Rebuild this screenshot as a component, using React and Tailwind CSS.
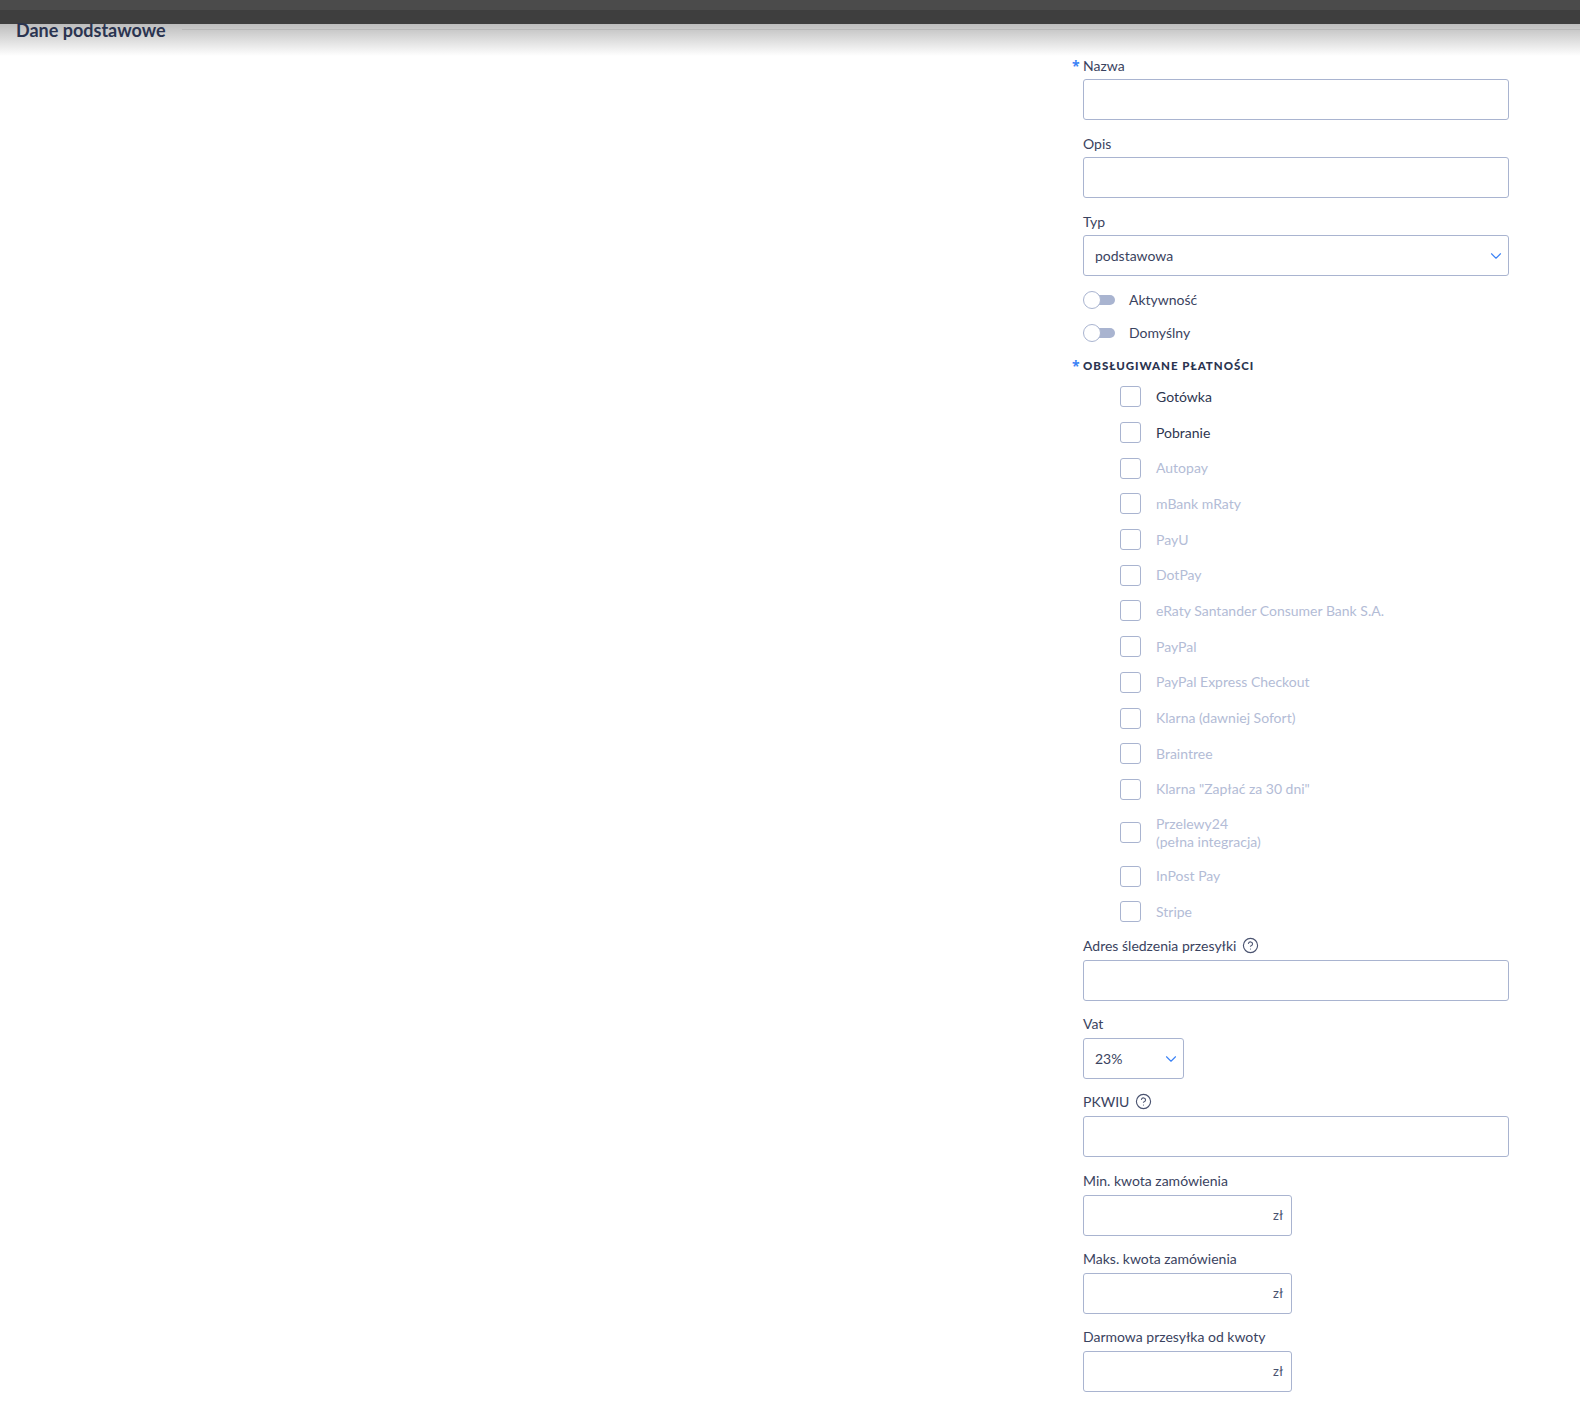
import { ChevronDown, CircleHelp } from 'lucide-react';

const payments = [
	{ name: 'Gotówka', active: true },
	{ name: 'Pobranie', active: true },
	{ name: 'Autopay' },
	{ name: 'mBank mRaty' },
	{ name: 'PayU' },
	{ name: 'DotPay' },
	{ name: 'eRaty Santander Consumer Bank S.A.' },
	{ name: 'PayPal' },
	{ name: 'PayPal Express Checkout' },
	{ name: 'Klarna (dawniej Sofort)' },
	{ name: 'Braintree' },
	{ name: 'Klarna "Zapłać za 30 dni"' },
	{ name: 'Przelewy24', extra: '(pełna integracja)' },
	{ name: 'InPost Pay' },
	{ name: 'Stripe' },
];

function Star() {
	return <span className="absolute left-[-11px] top-[-1px] text-[14px] font-bold font-['Noto_Sans',sans-serif] text-[#3b82f6]">*</span>;
}

function Label({ children, required, hint }) {
	return (
		<label className="relative flex items-center h-5 mb-[3px] pb-[2px] gap-[6px]">
			{required && <Star />}
			{children}
			{hint && <CircleHelp size={17} strokeWidth={1.6} className="text-[#4a5370]" />}
		</label>
	);
}

function TextField({ label, required, hint, last }) {
	return (
		<div className={last ? 'mb-[15px]' : 'mb-[14px]'}>
			<Label required={required} hint={hint}>{label}</Label>
			<input type="text" className="block w-full h-[41px] px-3 bg-white border border-[#a9b4d0] rounded-[3px] outline-none" />
		</div>
	);
}

function SelectField({ label, value, width, last }) {
	return (
		<div className={last ? 'mb-[15px]' : 'mb-[14px]'}>
			<Label>{label}</Label>
			<div className={`relative h-[41px] ${width}`}>
				<select defaultValue={value} className="block w-full h-full pl-[11px] pr-8 bg-white border border-[#a9b4d0] rounded-[3px] outline-none appearance-none">
					<option>{value}</option>
				</select>
				<ChevronDown size={18} strokeWidth={1.5} className="absolute right-[4px] top-[12px] text-[#3b82f6] pointer-events-none" />
			</div>
		</div>
	);
}

function MoneyField({ label }) {
	return (
		<div className="mb-[14px]">
			<Label>{label}</Label>
			<div className="relative h-[41px] w-[209px]">
				<input type="text" className="block w-full h-full pl-3 pr-8 bg-white border border-[#a9b4d0] rounded-[3px] outline-none" />
				<span className="absolute right-[9px] top-[11px] text-[13px] text-[#4a5370]">zł</span>
			</div>
		</div>
	);
}

function Toggle({ label, last }) {
	return (
		<div className={`flex items-center h-[18px] ${last ? 'mb-[14px]' : 'mb-[15px]'}`}>
			<span className="relative block w-8 h-[18px] shrink-0">
				<span className="absolute right-0 top-[4px] w-[24px] h-[10px] rounded-full bg-[#a9b4d0]" />
				<span className="absolute left-0 top-0 w-[18px] h-[18px] rounded-full bg-white border border-[#a9b4d0]" />
			</span>
			<span className="ml-[14px] pb-px">{label}</span>
		</div>
	);
}

function PaymentRow({ item }) {
	return (
		<div className={`flex items-center pl-[37px] ${item.extra ? 'h-[51px]' : 'h-[35.7px]'}`}>
			<span className="block w-[21px] h-[21px] shrink-0 bg-white border border-[#a9b4d0] rounded-[3px]" />
			<span className={`ml-[15px] leading-[18px] ${item.active ? 'text-[#2e3650]' : 'text-[#b3bcd6]'}`}>
				{item.name}
				{item.extra && <><br />{item.extra}</>}
			</span>
		</div>
	);
}

function App() {
	return (
		<div className="min-h-screen bg-white text-[14px] text-[#3a4360] font-['Lato',sans-serif]">
			<div className="h-[10px] bg-[#4b4b4b]" />
			<div className="h-[14px] bg-[#3e3e3e]" />
			<div className="h-[32px] flex items-start bg-gradient-to-b from-[#bdbdbd] to-white">
				<h2 className="ml-4 text-[18px] leading-[12px] font-bold text-[#2b3450]">Dane podstawowe</h2>
				<div className="flex-1 h-px mt-[5px] ml-4 bg-[#b8b8b8]" />
			</div>
			<div className="grid grid-cols-[1083px_426px]">
				<div />
				<div>
					<TextField label="Nazwa" required />
					<TextField label="Opis" />
					<SelectField label="Typ" value="podstawowa" width="w-full" last />
					<Toggle label="Aktywność" />
					<Toggle label="Domyślny" last />
					<div className="relative h-5 text-[11.5px] font-black tracking-[0.085em] uppercase text-[#2b3450] flex items-center">
						<Star />
						Obsługiwane płatności
					</div>
					<div className="mt-[3px] mb-[7px]">
						{payments.map((item) => (
							<PaymentRow key={item.name} item={item} />
						))}
					</div>
					<TextField label="Adres śledzenia przesyłki" hint />
					<SelectField label="Vat" value="23%" width="w-[101px]" />
					<TextField label="PKWIU" hint last />
					<MoneyField label="Min. kwota zamówienia" />
					<MoneyField label="Maks. kwota zamówienia" />
					<MoneyField label="Darmowa przesyłka od kwoty" />
				</div>
			</div>
		</div>
	);
}

export default App;
